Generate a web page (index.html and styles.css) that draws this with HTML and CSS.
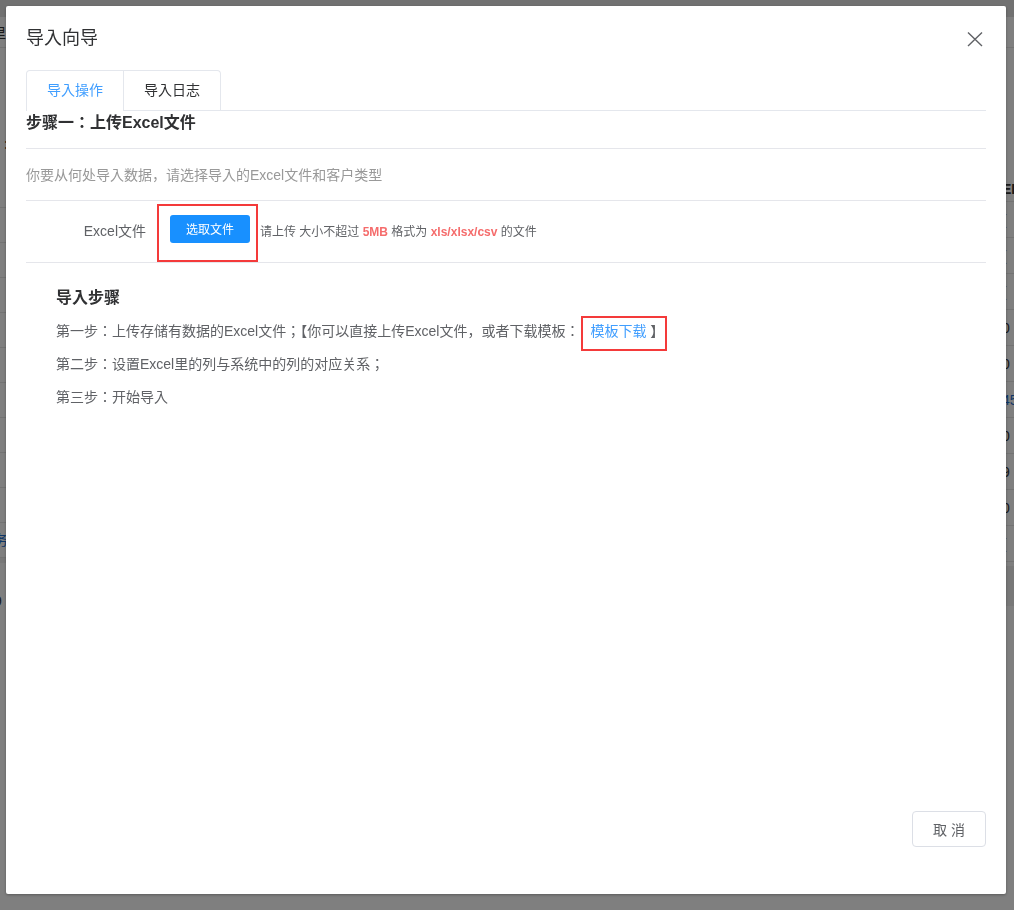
FILE: index.html
```html
<!DOCTYPE html>
<html lang="zh-CN">
<head>
<meta charset="utf-8">
<title>导入向导</title>
<link rel="stylesheet" href="styles.css">
</head>
<body>
<div class="page">
  <div class="topnav"></div>
  <div class="toolbar"><span class="tb-text">里</span></div>
  <div class="content">
    <div class="side">
      <div class="side-head">:</div>
      <div class="side-row"></div>
      <div class="side-row"></div>
      <div class="side-row"></div>
      <div class="side-row"></div>
      <div class="side-row"></div>
      <div class="side-row"></div>
      <div class="side-row"></div>
      <div class="side-row"></div>
      <div class="side-row"></div>
      <div class="side-row"></div>
      <div class="side-row link">务</div>
      <div class="side-band"></div>
      <div class="side-foot">9</div>
    </div>
    <div class="main">
      <div class="row head"><span class="fill"></span><span class="last">ED</span></div>
      <div class="row"><span class="fill"></span><span class="last brown">(</span></div>
      <div class="row"><span class="fill"></span><span class="last brown">(</span></div>
      <div class="row"><span class="fill"></span><span class="last brown">(</span></div>
      <div class="row"><span class="fill"></span><span class="last">0</span></div>
      <div class="row"><span class="fill"></span><span class="last">0</span></div>
      <div class="row"><span class="fill"></span><span class="last link">45</span></div>
      <div class="row"><span class="fill"></span><span class="last">0</span></div>
      <div class="row"><span class="fill"></span><span class="last">9</span></div>
      <div class="row"><span class="fill"></span><span class="last">0</span></div>
      <div class="row"><span class="fill"></span><span class="last brown">(</span></div>
      <div class="main-band"></div>
    </div>
  </div>
</div>
<div class="mask"></div>

<div class="dialog" lang="ja">
  <div class="dialog-header">
    <span class="dialog-title">导入向导</span>
    <button class="close" type="button" aria-label="关闭">
      <svg width="16" height="16" viewBox="0 0 16 16"><path d="M1 1.5 L15 15 M15 1.5 L1 15" stroke="#606266" stroke-width="1.4" fill="none"/></svg>
    </button>
  </div>
  <div class="dialog-body">
    <div class="tabs">
      <div class="tab-list">
        <div class="tab active">导入操作</div>
        <div class="tab">导入日志</div>
      </div>
    </div>
    <h3 class="step-title">步骤一：上传Excel文件</h3>
    <div class="desc">你要从何处导入数据，请选择导入的Excel文件和客户类型</div>
    <div class="upload-row">
      <span class="label">Excel文件</span>
      <button class="btn-primary marked" type="button">选取文件</button>
      <span class="hint">请上传 大小不超过 <b>5MB</b> 格式为 <b>xls/xlsx/csv</b> 的文件</span>
    </div>
    <div class="steps">
      <h4 class="steps-title">导入步骤</h4>
      <p>第一步：上传存储有数据的Excel文件；【你可以直接上传Excel文件，或者下载模板：<a class="tpl-link" href="#">模板下载</a> 】</p>
      <p>第二步：设置Excel里的列与系统中的列的对应关系；</p>
      <p>第三步：开始导入</p>
    </div>
  </div>
  <div class="dialog-footer">
    <button class="btn" type="button">取 消</button>
  </div>
</div>
</body>
</html>
```

FILE: styles.css
```css
* { box-sizing: border-box; }
html, body { margin: 0; padding: 0; }
body {
  width: 1014px;
  height: 910px;
  overflow: hidden;
  font-family: "Liberation Sans", "Noto Sans CJK JP", "Noto Sans CJK SC", sans-serif;
  font-size: 14px;
  color: #606266;
  background: #fff;
  position: relative;
}

/* background page */
.page { height: 910px; background: #fff; }
.topnav { height: 17px; background: #e2e2e2; }
.toolbar { height: 31px; border-bottom: 1px solid #e6e6e6; display: flex; align-items: center; }
.tb-text { margin-left: -8px; color: #333; }
.content { display: flex; }
.side { width: 200px; }
.side-head { height: 125px; padding: 88px 0 0 4px; color: #333; font-weight: bold; }
.side-row { height: 35px; border-bottom: 1px solid #e6e6e6; }
.side-row.link { color: #1e6fd0; line-height: 35px; margin-left: -6px; }
.side-band { height: 5px; background: #f0f0f0; }
.side-foot { margin-top: 30px; margin-left: -6px; color: #333; }
.main { flex: 1; padding-top: 118px; }
.row { height: 36px; display: flex; align-items: center; border-bottom: 1px solid #e6e6e6; }
.row.head { font-weight: bold; color: #333; padding-top: 10px; }
.fill { flex: 1; }
.last { width: 12px; white-space: nowrap; color: #333; }
.brown { color: #8a5a20; }
.link { color: #1e6fd0; }
.main-band { height: 40px; margin-top: 4px; background: #f0f0f0; }

.mask {
  position: fixed;
  inset: 0;
  background: rgba(0, 0, 0, 0.5);
}

/* dialog */
.dialog {
  position: fixed;
  left: 6px;
  top: 6px;
  width: 1000px;
  height: 888px;
  background: #fff;
  border-radius: 2px;
  box-shadow: 0 1px 3px rgba(0, 0, 0, 0.3);
  display: flex;
  flex-direction: column;
}
.dialog-header {
  display: flex;
  align-items: center;
  justify-content: space-between;
  padding: 20px 23px 0 20px;
  height: 44px;
}
.dialog-title { font-size: 18px; line-height: 24px; color: #303133; }
.close {
  border: 0;
  background: none;
  padding: 0;
  width: 16px;
  height: 16px;
  margin-top: 2px;
  cursor: pointer;
}
.close svg { display: block; }

.dialog-body { flex: 1; padding: 20px 20px 0; }

.tabs { border-bottom: 1px solid #e4e7ed; }
.tab-list {
  display: inline-flex;
  border: 1px solid #e4e7ed;
  border-bottom: none;
  border-radius: 4px 4px 0 0;
  margin-bottom: -1px;
}
.tab {
  height: 40px;
  line-height: 39px;
  padding: 0 20px;
  border-bottom: 1px solid #e4e7ed;
  color: #303133;
}
.tab + .tab { border-left: 1px solid #e4e7ed; }
.tab.active { color: #409eff; border-bottom-color: #fff; }

.step-title {
  margin: 0;
  font-size: 16px;
  line-height: 24px;
  font-weight: bold;
  color: #303133;
  padding-bottom: 13px;
  border-bottom: 1px solid #e5e6eb;
}
.desc {
  color: #999;
  line-height: 20px;
  padding: 16px 0 15px;
  border-bottom: 1px solid #e5e6eb;
}

.upload-row {
  height: 62px;
  display: flex;
  align-items: center;
  border-bottom: 1px solid #e5e6eb;
}
.label { width: 120px; text-align: right; color: #606266; margin-bottom: 3px; }
.btn-primary {
  margin-left: 24px;
  margin-bottom: 6px;
  width: 80px;
  height: 28px;
  border: 0;
  border-radius: 3px;
  background: #1890ff;
  color: #fff;
  font-family: inherit;
  font-size: 12px;
  padding: 0;
}
.marked { position: relative; }
.marked::after {
  content: "";
  position: absolute;
  left: -13px;
  top: -11px;
  right: -8px;
  bottom: -19px;
  border: 2px solid #f43a3a;
}
.hint { margin-left: 10px; font-size: 12px; color: #606266; margin-bottom: 3px; }
.hint b { color: #f56c6c; }

.steps { padding: 23px 0 0 30px; }
.steps-title {
  margin: 0 0 11px;
  font-size: 16px;
  line-height: 24px;
  font-weight: bold;
  color: #303133;
}
.steps p { margin: 0 0 13px; line-height: 20px; color: #606266; }
.tpl-link {
  color: #409eff;
  text-decoration: none;
  display: inline-block;
  position: relative;
  margin-left: 11px;
}
.tpl-link::after {
  content: "";
  position: absolute;
  left: -9px;
  right: -21px;
  top: -5px;
  bottom: -10px;
  border: 2px solid #f43a3a;
}

.dialog-footer {
  display: flex;
  justify-content: flex-end;
  padding: 0 20px 47px;
}
.btn {
  height: 36px;
  padding: 0 20px;
  border: 1px solid #dcdfe6;
  border-radius: 4px;
  background: #fff;
  color: #606266;
  font-family: inherit;
  font-size: 14px;
}
```
